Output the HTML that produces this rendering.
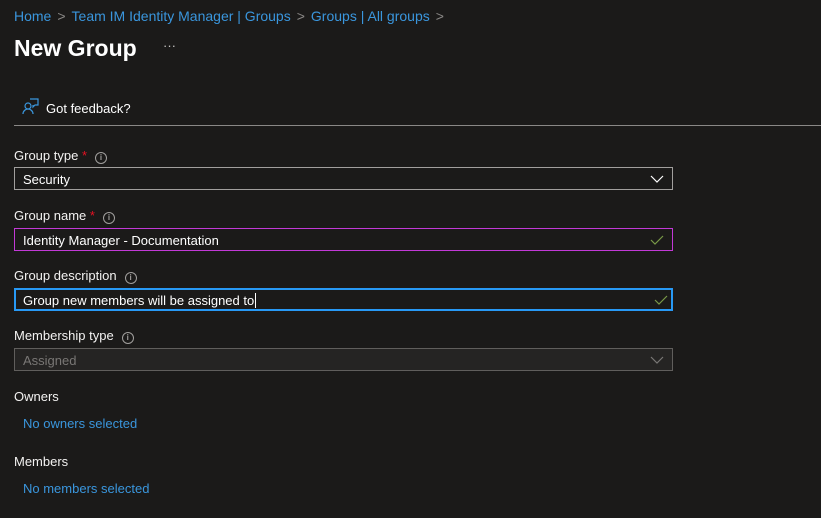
<!DOCTYPE html>
<html><head><style>
body{margin:0;width:821px;height:518px;background:#1b1a19;font-family:"Liberation Sans",sans-serif;color:#fff;position:relative;overflow:hidden;font-size:13px}
.a{position:absolute;white-space:nowrap}
.bc{color:#3a96dd;font-size:14px;top:8px;left:14px}
.bc span{color:#8a8886;margin:0 6px}
.lbl{left:14px;color:#f3f2f1;font-size:13px}
.req{color:#e81123}
.info{display:inline-block;width:10px;height:10px;border:1px solid #a19f9d;border-radius:50%;font-size:8px;line-height:10px;text-align:center;color:#a19f9d;vertical-align:0px;margin-left:8px;font-weight:bold}
.box{position:absolute;left:14px;width:657px;height:21px;border:1px solid #a19f9d;box-sizing:content-box}
.box .t{position:absolute;left:8px;top:4px;color:#fff}
.chev{position:absolute;right:8px;top:4px}
.link{color:#3a96dd;left:23px}
</style></head><body>
<div class="a bc">Home<span>&gt;</span>Team IM Identity Manager | Groups<span>&gt;</span>Groups | All groups<span>&gt;</span></div>
<div class="a" style="left:14px;top:35px;font-size:23px;font-weight:bold">New Group</div>
<div class="a" style="left:163px;top:38px;font-size:13px;color:#c8c6c4">···</div>
<svg class="a" style="left:22px;top:98px" width="17" height="17" viewBox="0 0 17 17" fill="none" stroke="#3a96dd" stroke-width="1.2"><circle cx="6" cy="8" r="3"/><path d="M1 16c0-3 2.5-5 5-5s5 2 5 5"/><path d="M8 1h8v6h-3l-2 2V7"/></svg>
<div class="a" style="left:46px;top:101px;font-size:13px">Got feedback?</div>
<div class="a" style="left:14px;top:125px;width:807px;height:1px;background:#8a8886"></div>

<div class="a lbl" style="top:148px">Group type <span class="req">*</span><span class="info">i</span></div>
<div class="box" style="top:167px"><div class="t">Security</div><svg class="chev" width="14" height="14" viewBox="0 0 14 14"><path d="M1 4l6 6 6-6" fill="none" stroke="#fff" stroke-width="1.2"/></svg></div>

<div class="a lbl" style="top:208px">Group name <span class="req">*</span><span class="info">i</span></div>
<div class="box" style="top:228px;border-color:#c239d6"><div class="t">Identity Manager - Documentation</div><svg class="chev" width="14" height="14" viewBox="0 0 14 14"><path d="M1 7l4 4 8-8" fill="none" stroke="#7a9a48" stroke-width="1.2"/></svg></div>

<div class="a lbl" style="top:268px">Group description<span class="info">i</span></div>
<div class="box" style="top:288px;border:2px solid #2899f5;left:14px;width:655px;height:19px"><div class="t" style="left:7px;top:3px">Group new members will be assigned to<span style="border-left:1px solid #fff;margin-left:1px"></span></div><svg class="chev" style="top:3px;right:3px" width="14" height="14" viewBox="0 0 14 14"><path d="M1 7l4 4 8-8" fill="none" stroke="#7a9a48" stroke-width="1.2"/></svg></div>

<div class="a lbl" style="top:328px">Membership type<span class="info">i</span></div>
<div class="box" style="top:348px;background:#252423;border-color:#605e5c"><div class="t" style="color:#797775">Assigned</div><svg class="chev" width="14" height="14" viewBox="0 0 14 14"><path d="M1 4l6 6 6-6" fill="none" stroke="#797775" stroke-width="1.2"/></svg></div>

<div class="a lbl" style="top:389px">Owners</div>
<div class="a link" style="top:416px">No owners selected</div>
<div class="a lbl" style="top:454px">Members</div>
<div class="a link" style="top:481px">No members selected</div>
</body></html>
